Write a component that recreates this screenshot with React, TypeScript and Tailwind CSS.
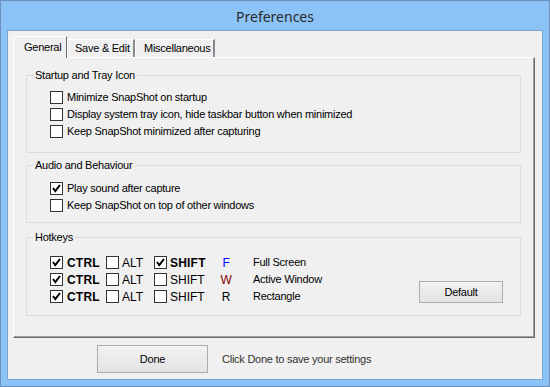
import React, { useState } from 'react'

const font = "font-['Liberation_Sans',Arial,sans-serif]"

const Check = ({ checked, onClick }: { checked: boolean; onClick?: () => void }) => (
  <span
    onClick={onClick}
    className="w-[13px] h-[13px] shrink-0 border border-[#333] bg-white flex items-center justify-center"
  >
    {checked && (
      <svg width="11" height="11" viewBox="0 0 11 11">
        <polyline points="2,5 4.3,8 9,2" fill="none" stroke="#000" strokeWidth="2" />
      </svg>
    )}
  </span>
)

const Option = ({ label, initial = false }: { label: string; initial?: boolean }) => {
  const [on, setOn] = useState(initial)
  return (
    <div className="h-[17px] flex items-center gap-[4px]">
      <Check checked={on} onClick={() => setOn(!on)} />
      <span>{label}</span>
    </div>
  )
}

const Group = ({ title, className, children }: { title: string; className: string; children: React.ReactNode }) => (
  <div className={`relative border border-[#dcdcdc] ${className}`}>
    <span className="absolute -top-[8px] left-[6px] px-[2px] bg-[#f0f0f0] leading-[14px]">{title}</span>
    {children}
  </div>
)

const hotkeys = [
  { shift: true, key: 'F', color: 'text-[#0000ff]', name: 'Full Screen' },
  { shift: false, key: 'W', color: 'text-[#800000]', name: 'Active Window' },
  { shift: false, key: 'R', color: 'text-black', name: 'Rectangle' },
]

const App = () => {
  const [tab, setTab] = useState('General')
  const tabs = [
    { name: 'General', w: 'w-[54px]', pl: 'pl-[10px]' },
    { name: 'Save & Edit', w: 'w-[68px]', pl: 'pl-[7px]' },
    { name: 'Miscellaneous', w: 'w-[80px]', pl: 'pl-[8px]' },
  ]

  return (
    <div className={`w-[550px] h-[387px] bg-[#8bc3f6] border border-[#6b90b9] flex flex-col text-[11px] tracking-[-0.25px] text-black ${font}`}>
      {/* Title bar */}
      <div className="h-[29px] flex items-center justify-center text-[14px] tracking-normal text-[#2b2b2b] font-['Noto_Sans',sans-serif] pt-[1px]">
        Preferences
      </div>

      {/* Client */}
      <div className="mx-[6px] mb-[6px] flex-1 border border-[#7ba6d3] bg-[#f0f0f0] pt-[5px] pl-[5px] pr-[7px] flex flex-col">
        {/* Tabs */}
        <div className="flex items-end h-[21px]">
          {tabs.map(t =>
            t.name === tab ? (
              <div
                key={t.name}
                onClick={() => setTab(t.name)}
                className={`${t.w} ${t.pl} h-[22px] -mb-[1px] relative z-10 bg-[#f0f0f0] border-t border-l border-white border-r border-r-[#696969] flex items-center pb-[1px]`}
              >
                {t.name}
              </div>
            ) : (
              <div
                key={t.name}
                onClick={() => setTab(t.name)}
                className={`${t.w} ${t.pl} h-[18px] bg-[#f0f0f0] border-t border-l border-white border-r-2 border-r-[#8a8a8a] flex items-center`}
              >
                {t.name}
              </div>
            )
          )}
        </div>

        {/* Panel */}
        <div className="h-[281px] border-t border-l border-white border-r border-b border-r-[#696969] border-b-[#696969]">
          <div className="h-full border-r border-b border-[#a0a0a0] pt-[17px] pl-[12px] pr-[12px] flex flex-col">
            <Group title="Startup and Tray Icon" className="h-[78px] pt-[13px] pl-[23px]">
              <Option label="Minimize SnapShot on startup" />
              <Option label="Display system tray icon, hide taskbar button when minimized" />
              <Option label="Keep SnapShot minimized after capturing" />
            </Group>

            <Group title="Audio and Behaviour" className="h-[58px] mt-[12px] pt-[14px] pl-[23px]">
              <Option label="Play sound after capture" initial />
              <Option label="Keep SnapShot on top of other windows" />
            </Group>

            <Group title="Hotkeys" className="h-[79px] mt-[14px] pt-[16px] pl-[23px] flex items-end pb-[12px]">
              <div className="self-start">
                {hotkeys.map(h => (
                  <div key={h.key} className="h-[17px] flex items-center">
                    <div className="w-[56px] flex items-center gap-[4px]">
                      <Check checked />
                      <span className="font-bold text-[12px] tracking-[0.2px]">CTRL</span>
                    </div>
                    <div className="w-[48px] flex items-center gap-[3px]">
                      <Check checked={false} />
                      <span className="text-[12px] tracking-normal">ALT</span>
                    </div>
                    <div className="w-[58px] flex items-center gap-[3px]">
                      <Check checked={h.shift} />
                      <span className={`text-[12px] ${h.shift ? 'font-bold tracking-[0.2px]' : 'tracking-normal'}`}>SHIFT</span>
                    </div>
                    <span className={`w-[28px] text-center text-[12px] ${h.color}`}>{h.key}</span>
                    <span className="ml-[13px]">{h.name}</span>
                  </div>
                ))}
              </div>
              <button className="ml-auto mr-[17px] w-[84px] h-[22px] border border-[#acacac] bg-gradient-to-b from-[#f2f2f2] to-[#e3e3e3] text-[11px]">
                Default
              </button>
            </Group>
          </div>
        </div>

        {/* Footer */}
        <div className="flex items-center mt-[7px] pl-[84px]">
          <button className="w-[111px] h-[28px] border border-[#acacac] bg-gradient-to-b from-[#f2f2f2] to-[#e3e3e3]">
            Done
          </button>
          <span className="ml-[14px] text-[#333]">Click Done to save your settings</span>
        </div>
      </div>
    </div>
  )
}

export default App
